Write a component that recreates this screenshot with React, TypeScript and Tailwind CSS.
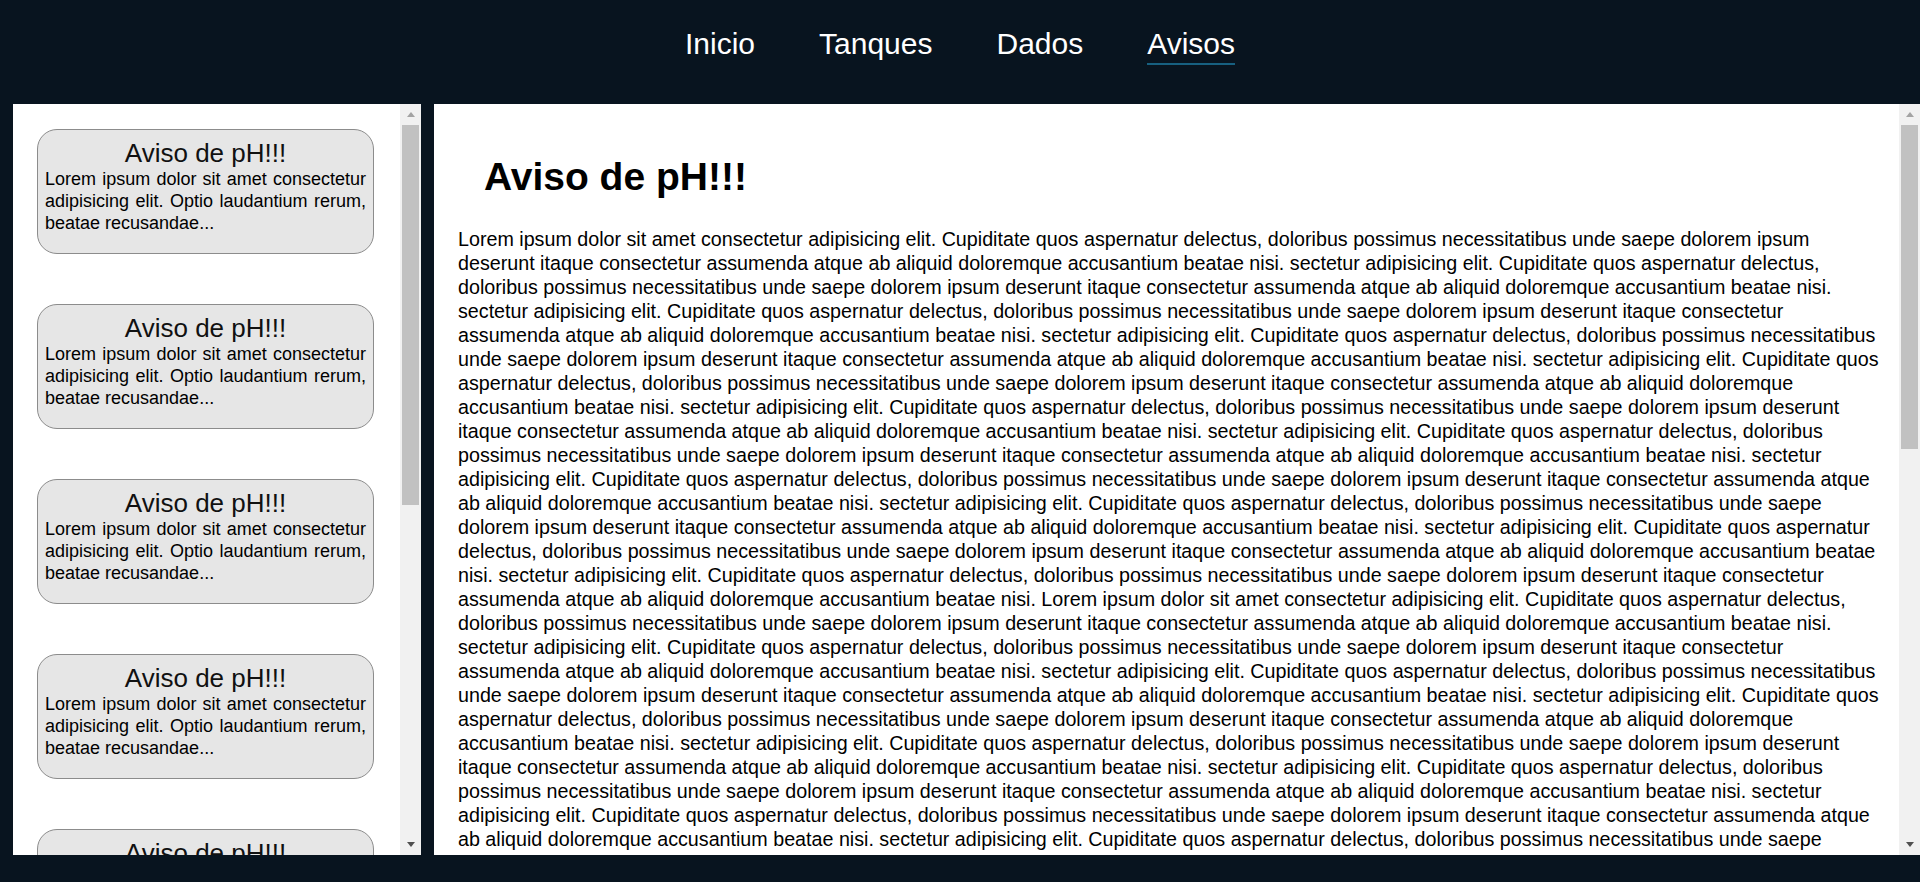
import React from "react"

const navItems = ["Inicio", "Tanques", "Dados", "Avisos"]

const opening =
  "Lorem ipsum dolor sit amet consectetur adipisicing elit. Cupiditate quos aspernatur delectus, doloribus possimus necessitatibus unde saepe dolorem ipsum deserunt itaque consectetur assumenda atque ab aliquid doloremque accusantium beatae nisi."
const filler =
  "sectetur adipisicing elit. Cupiditate quos aspernatur delectus, doloribus possimus necessitatibus unde saepe dolorem ipsum deserunt itaque consectetur assumenda atque ab aliquid doloremque accusantium beatae nisi."

// one block = the opening sentence followed by ten filler sentences
const block = [opening, ...Array(10).fill(filler)].join(" ")
const bodyText = Array(4).fill(block).join(" ")

function ScrollBar({ thumb }: { thumb: string }) {
  return (
    <div className="flex w-[21px] shrink-0 flex-col bg-[#f1f1f1]">
      <div className="flex h-[21px] items-center justify-center">
        <div className="h-0 w-0 border-x-[4.5px] border-b-[5px] border-x-transparent border-b-[#a3a3a3]" />
      </div>
      <div className={`mx-[2px] bg-[#c1c1c1] ${thumb}`} />
      <div className="flex-1" />
      <div className="flex h-[21px] items-center justify-center">
        <div className="h-0 w-0 border-x-[4.5px] border-t-[5px] border-x-transparent border-t-[#505050]" />
      </div>
    </div>
  )
}

function AvisoCard() {
  return (
    <div className="w-[337px] h-[125px] shrink-0 rounded-[20px] border border-[#8c8c8c] bg-[#e6e6e6] px-[7px] pt-[8px]">
      <h3 className="text-center text-[26px] leading-[30px] text-[#111111]">Aviso de pH!!!</h3>
      <p className="text-justify text-[18px] leading-[22px] text-black">
        Lorem ipsum dolor sit amet consectetur adipisicing elit. Optio laudantium rerum, beatae recusandae...
      </p>
    </div>
  )
}

export default function App() {
  return (
    <div className="h-[882px] w-full overflow-hidden bg-[#08141f] font-['Liberation_Sans',Arial,sans-serif]">
      {/* Top navigation */}
      <header className="h-[104px] pt-[27px]">
        <nav className="flex justify-center gap-16">
          {navItems.map((item) => (
            <a
              key={item}
              href="#"
              className={`border-b-2 pb-[2px] text-[30px] leading-[34px] text-white ${
                item === "Avisos" ? "border-[#176080]" : "border-transparent"
              }`}
            >
              {item}
            </a>
          ))}
        </nav>
      </header>

      <main className="flex h-[751px] gap-[13px] pl-[13px]">
        {/* List of warnings */}
        <aside className="flex w-[408px] shrink-0 bg-white">
          <div className="flex flex-1 flex-col gap-[50px] overflow-hidden p-6 pt-[25px]">
            {Array.from({ length: 8 }).map((_, i) => (
              <AvisoCard key={i} />
            ))}
          </div>
          <ScrollBar thumb="h-[380px]" />
        </aside>

        {/* Selected warning */}
        <section className="flex flex-1 bg-white">
          <div className="flex-1 overflow-hidden pl-6 pr-[20px] pt-[50px] pb-6">
            <h1 className="pl-[26px] text-[39px] font-bold leading-[45px] text-black">Aviso de pH!!!</h1>
            <p className="mt-[28px] text-[19.7px] leading-[24px] text-black">{bodyText}</p>
          </div>
          <ScrollBar thumb="h-[324px]" />
        </section>
      </main>
    </div>
  )
}
